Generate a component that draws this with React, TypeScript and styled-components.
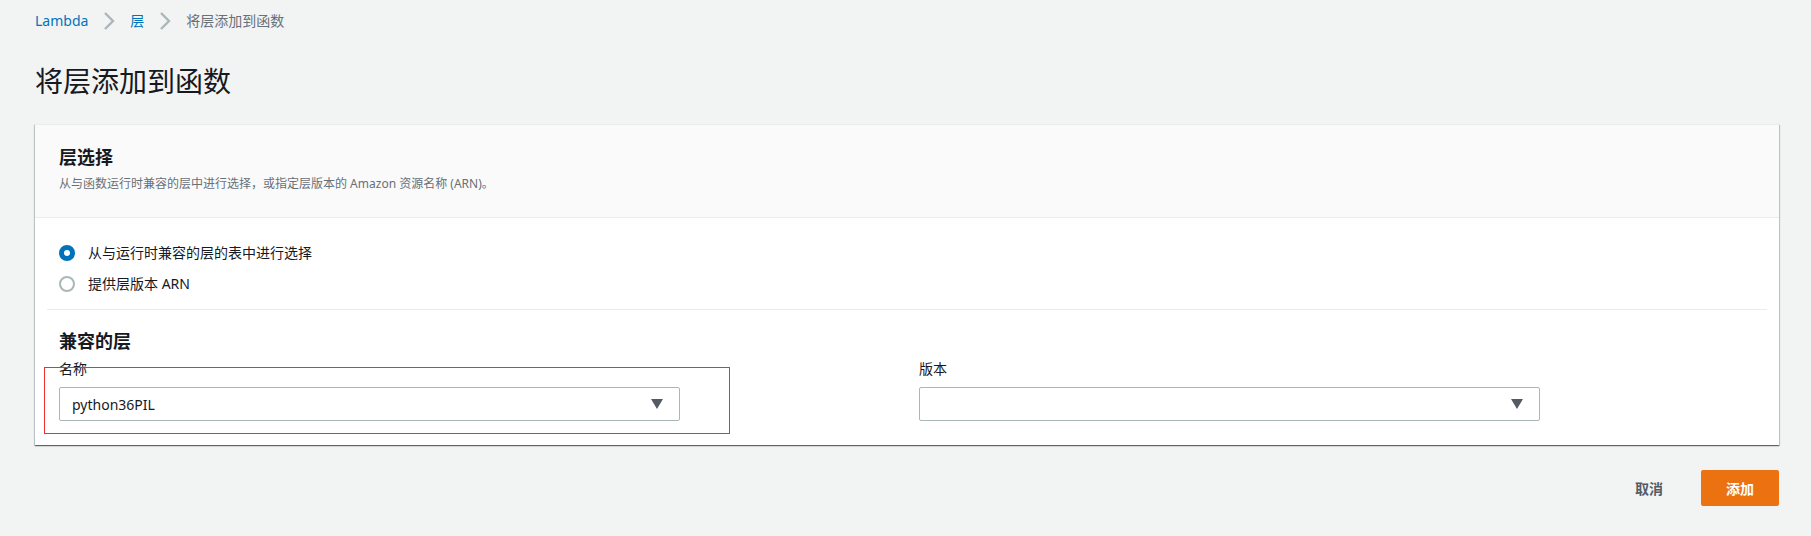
import React from 'react';
import styled, { createGlobalStyle } from 'styled-components';

const GlobalStyle = createGlobalStyle`
  html, body {
    margin: 0;
    padding: 0;
    background: #f2f3f3;
  }
  body {
    font-family: "Noto Sans", "Noto Sans CJK SC", sans-serif;
    font-size: 14px;
    color: #16191f;
  }
  * {
    box-sizing: border-box;
  }
`;

const Page = styled.div`
  padding: 11px 32px 0 35px;
`;

const Breadcrumbs = styled.nav`
  display: flex;
  align-items: center;
  height: 20px;
  line-height: 20px;
  font-size: 14px;
`;

const Crumb = styled.span<{ $current?: boolean }>`
  color: ${p => (p.$current ? '#687078' : '#0073bb')};
`;

const ChevronIcon = styled.svg`
  width: 12px;
  height: 18px;
  margin: 0 15px 0 15px;
  flex: none;
`;

const Title = styled.h1`
  margin: 32px 0 0;
  font-size: 28px;
  line-height: 36px;
  font-weight: 400;
  color: #16191f;
`;

const Card = styled.section`
  margin-top: 25px;
  background: #fff;
  border-top: 1px solid #eaeded;
  box-shadow: 0 1px 1px 0 rgba(0, 28, 36, 0.5), 1px 1px 1px 0 rgba(0, 28, 36, 0.15),
    -1px 1px 1px 0 rgba(0, 28, 36, 0.15);
`;

const CardHeader = styled.header`
  background: #fafafa;
  border-bottom: 1px solid #eaeded;
  padding: 19px 24px 24px;
`;

const HeaderTitle = styled.h2`
  margin: 0;
  font-size: 18px;
  line-height: 26px;
  font-weight: 700;
`;

const HeaderDesc = styled.p`
  margin: 5px 0 0;
  font-size: 12px;
  line-height: 18px;
  color: #687078;
`;

const CardBody = styled.div`
  padding: 24px 12px 24px;
`;

const Section = styled.div`
  padding: 0 12px;
`;

const RadioGroup = styled(Section)`
  display: flex;
  flex-direction: column;
  gap: 9px;
`;

const RadioRow = styled.label`
  display: flex;
  align-items: center;
  height: 22px;
  font-size: 14px;
  line-height: 22px;
`;

const RadioDot = styled.span<{ $checked?: boolean }>`
  width: 16px;
  height: 16px;
  border-radius: 50%;
  flex: none;
  margin-right: 13px;
  background: #fff;
  border: ${p => (p.$checked ? '5px solid #0073bb' : '2px solid #aab7b8')};
`;

const Divider = styled.hr`
  margin: 14px 0 0;
  border: 0;
  border-top: 1px solid #eaeded;
`;

const SubTitle = styled.h3`
  margin: 18px 0 0;
  font-size: 18px;
  line-height: 26px;
  font-weight: 700;
`;

const Fields = styled.div`
  display: grid;
  grid-template-columns: 1fr 1fr;
  gap: 24px;
  margin-top: 5px;
`;

const Field = styled.div`
  position: relative;
`;

const FieldLabel = styled.div`
  font-size: 14px;
  line-height: 20px;
  color: #16191f;
`;

const Select = styled.div`
  margin-top: 8px;
  width: 621px;
  height: 34px;
  border: 1px solid #aab7b8;
  border-radius: 2px;
  background: #fff;
  display: flex;
  align-items: center;
  justify-content: space-between;
  padding: 0 16px 0 12px;
  font-size: 14px;
  color: #16191f;
`;

const Caret = styled.svg`
  width: 12px;
  height: 10px;
  flex: none;
`;

const Highlight = styled.div`
  position: absolute;
  left: -15px;
  top: 8px;
  width: 686px;
  height: 67px;
  border: 1px solid #f0302f;
  pointer-events: none;
`;

const Footer = styled.div`
  display: flex;
  justify-content: flex-end;
  align-items: center;
  margin-top: 25px;
`;

const Button = styled.button<{ $primary?: boolean }>`
  height: 36px;
  padding: 0 ${p => (p.$primary ? '25px' : '20px')};
  margin-left: ${p => (p.$primary ? '18px' : '0')};
  border: 0;
  border-radius: 2px;
  font-family: inherit;
  font-size: 14px;
  font-weight: 700;
  background: ${p => (p.$primary ? '#ec7211' : 'transparent')};
  color: ${p => (p.$primary ? '#fff' : '#545b64')};
  cursor: pointer;
`;

const Chevron = () => (
  <ChevronIcon viewBox="0 0 12 18">
    <path d="M2 1l8 8-8 8" fill="none" stroke="#aab7b8" strokeWidth="2.4" />
  </ChevronIcon>
);

const SelectBox = ({ value }: { value?: string }) => (
  <Select>
    <span>{value}</span>
    <Caret viewBox="0 0 12 10">
      <path d="M0 0h12L6 10z" fill="#545b64" />
    </Caret>
  </Select>
);

export default function App() {
  return (
    <>
      <GlobalStyle />
      <Page>
        <Breadcrumbs>
          <Crumb>Lambda</Crumb>
          <Chevron />
          <Crumb>层</Crumb>
          <Chevron />
          <Crumb $current>将层添加到函数</Crumb>
        </Breadcrumbs>

        <Title>将层添加到函数</Title>

        <Card>
          <CardHeader>
            <HeaderTitle>层选择</HeaderTitle>
            <HeaderDesc>
              从与函数运行时兼容的层中进行选择，或指定层版本的 Amazon 资源名称 (ARN)。
            </HeaderDesc>
          </CardHeader>
          <CardBody>
            <RadioGroup>
              <RadioRow>
                <RadioDot $checked />
                从与运行时兼容的层的表中进行选择
              </RadioRow>
              <RadioRow>
                <RadioDot />
                提供层版本 ARN
              </RadioRow>
            </RadioGroup>
            <Divider />
            <Section>
              <SubTitle>兼容的层</SubTitle>
              <Fields>
                <Field>
                  <FieldLabel>名称</FieldLabel>
                  <SelectBox value="python36PIL" />
                  <Highlight />
                </Field>
                <Field>
                  <FieldLabel>版本</FieldLabel>
                  <SelectBox />
                </Field>
              </Fields>
            </Section>
          </CardBody>
        </Card>

        <Footer>
          <Button>取消</Button>
          <Button $primary>添加</Button>
        </Footer>
      </Page>
    </>
  );
}
